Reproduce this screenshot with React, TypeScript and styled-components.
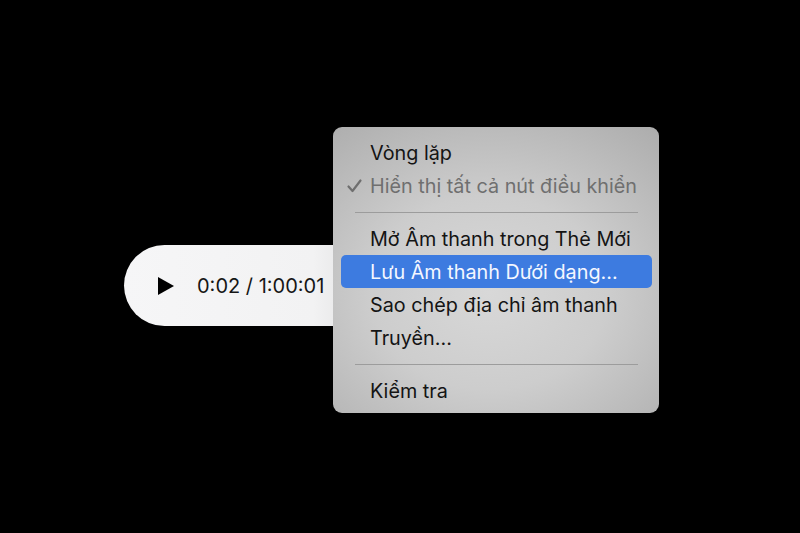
import React from 'react';
import styled, { createGlobalStyle } from 'styled-components';

const GlobalStyle = createGlobalStyle`
    html, body {
        margin: 0;
        padding: 0;
        background: #000;
    }
    body {
        font-family: Inter, "Noto Sans", "Liberation Sans", sans-serif;
    }
`;

const Stage = styled.div`
    position: relative;
    width: 800px;
    height: 533px;
    background: #000;
    overflow: hidden;
    padding: 245px 0 0 124px;
    box-sizing: border-box;
`;

const Player = styled.div`
    display: flex;
    align-items: center;
    width: 270px;
    height: 81px;
    border-radius: 41px 0 0 41px;
    background: linear-gradient(90deg, #f6f6f7 0%, #f2f2f3 70%, #d8d8d8 100%);
    padding-left: 34px;
    box-sizing: border-box;
    gap: 23px;
`;

const PlayIcon = styled.svg`
    width: 16px;
    height: 18px;
    flex: none;
`;

const Time = styled.span`
    font-size: 20px;
    color: #161616;
    white-space: nowrap;
`;

const Menu = styled.div`
    position: absolute;
    left: 333px;
    top: 127px;
    width: 326px;
    height: 286px;
    box-sizing: border-box;
    padding: 9.5px 7px 6px 8px;
    border-radius: 9px;
    background: radial-gradient(ellipse 80% 75% at 48% 58%, #d8d8d8 0%, #cdcdcd 45%, #adadad 100%);
    display: flex;
    flex-direction: column;
`;

const Item = styled.div<{ $active?: boolean; $disabled?: boolean }>`
    position: relative;
    height: 33px;
    display: flex;
    align-items: center;
    padding-left: 29px;
    border-radius: 5px;
    font-size: 19.8px;
    white-space: nowrap;
    color: ${(p) => (p.$active ? '#f4f7ff' : p.$disabled ? '#6f6f6f' : '#141414')};
    background: ${(p) => (p.$active ? '#3d7be0' : 'transparent')};
`;

const Check = styled.span`
    position: absolute;
    left: 6px;
    top: 50%;
    transform: translateY(-50%);
    display: flex;
`;

const Separator = styled.div`
    height: 20px;
    display: flex;
    align-items: center;
    padding: 0 14px 0 14px;

    &::after {
        content: '';
        flex: 1;
        height: 1px;
        background: #9c9c9c;
    }
`;

const App: React.FC = () => (
    <>
        <GlobalStyle />
        <Stage>
            <Player>
                <PlayIcon viewBox="0 0 16 18">
                    <path d="M0 0 L16 9 L0 18 Z" fill="#000" />
                </PlayIcon>
                <Time>0:02 / 1:00:01</Time>
            </Player>
            <Menu>
                <Item>Vòng lặp</Item>
                <Item $disabled>
                    <Check>
                        <svg width="15" height="14" viewBox="0 0 15 14">
                            <path d="M1.5 7.5 L5.5 12 L13.5 1.5" fill="none" stroke="#6f6f6f" strokeWidth="2.2" strokeLinecap="round" strokeLinejoin="round" />
                        </svg>
                    </Check>
                    Hiển thị tất cả nút điều khiển
                </Item>
                <Separator />
                <Item>Mở Âm thanh trong Thẻ Mới</Item>
                <Item $active>Lưu Âm thanh Dưới dạng...</Item>
                <Item>Sao chép địa chỉ âm thanh</Item>
                <Item>Truyền...</Item>
                <Separator />
                <Item>Kiểm tra</Item>
            </Menu>
        </Stage>
    </>
);

export default App;
